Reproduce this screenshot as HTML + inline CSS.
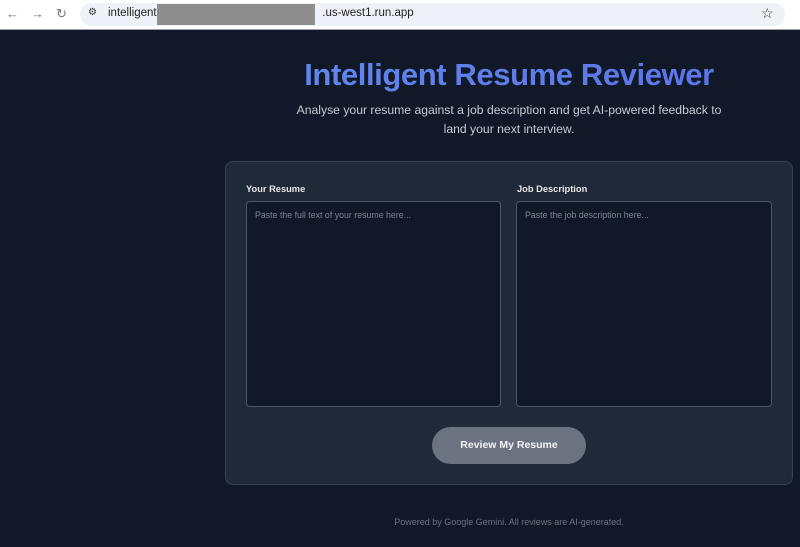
<!DOCTYPE html>
<html><head><meta charset="utf-8"><style>
*{box-sizing:border-box;margin:0;padding:0}
body{width:800px;height:547px;overflow:hidden;background:#111827;font-family:"Liberation Sans",sans-serif;position:relative}
.bar{position:absolute;left:0;top:0;width:800px;height:30px;background:#fff;border-bottom:1px solid #9ca3af}
.pill{position:absolute;left:80px;top:3px;width:705px;height:23px;border-radius:12px;background:#eef1f8}
.url{position:absolute;left:108px;top:7px;font-size:11.5px;color:#222}
.red{position:absolute;left:157px;top:4px;width:158px;height:21px;background:#8d8d8d}
.nav{position:absolute;top:6px;font-size:13px;color:#777}
h1{position:absolute;left:0;width:1018px;top:57px;text-align:center;font-size:31px;letter-spacing:-0.4px;font-weight:bold;background:linear-gradient(90deg,#6592ee,#5869e6);-webkit-background-clip:text;color:transparent}
.sub{position:absolute;left:290px;width:438px;top:101px;text-align:center;font-size:12.2px;line-height:19px;color:#c5cad3}
.card{position:absolute;left:225px;top:161px;width:568px;height:324px;background:#1f2937;border:1px solid #374151;border-radius:8px}
.lab{position:absolute;top:184px;font-size:9.3px;font-weight:bold;color:#e5e7eb}
.ta{position:absolute;top:201px;width:255px;height:206px;background:#111827;border:1px solid #4b5563;border-radius:4px;padding:8px 8px;font-size:8.8px;color:#7b8494}
.btn{position:absolute;left:432px;top:427px;width:154px;height:37px;border-radius:19px;background:#6b7280;color:#f3f4f6;font-size:10.5px;font-weight:bold;text-align:center;line-height:37px}
.foot{position:absolute;left:0;width:1018px;top:517px;text-align:center;font-size:9px;color:#6b7280}
</style></head><body>
<div class="bar"><span class="nav" style="left:6px">←</span><span class="nav" style="left:31px">→</span><span class="nav" style="left:56px">↻</span>
<div class="pill"></div><span style="position:absolute;left:88px;top:7px;font-size:10px;color:#333">⚙</span>
<div class="url">intelligent-r<span style="display:inline-block;width:158px"></span>.us-west1.run.app</div><div class="red"></div>
<span style="position:absolute;left:761px;top:5px;font-size:14px;color:#333">☆</span></div>
<h1>Intelligent Resume Reviewer</h1>
<div class="sub">Analyse your resume against a job description and get AI-powered feedback to land your next interview.</div>
<div class="card"></div>
<div class="lab" style="left:246px">Your Resume</div>
<div class="lab" style="left:517px">Job Description</div>
<div class="ta" style="left:246px">Paste the full text of your resume here...</div>
<div class="ta" style="left:516px;width:256px">Paste the job description here...</div>
<div class="btn">Review My Resume</div>
<div class="foot">Powered by Google Gemini. All reviews are AI-generated.</div>
</body></html>
